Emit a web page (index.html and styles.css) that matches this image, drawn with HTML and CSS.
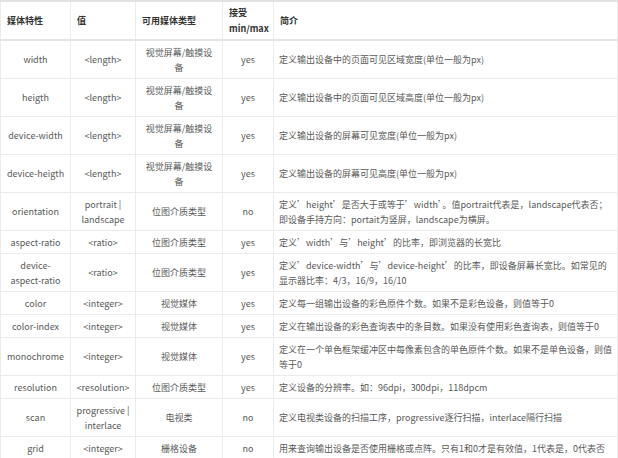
FILE: index.html
```html
<!DOCTYPE html>
<html lang="zh-CN">
<head>
<meta charset="utf-8">
<title>媒体特性</title>
<link rel="stylesheet" href="styles.css">
</head>
<body>
<table class="media-table">
  <colgroup>
    <col class="c1"><col class="c2"><col class="c3"><col class="c4"><col class="c5">
  </colgroup>
  <thead>
    <tr>
      <th>媒体特性</th>
      <th>值</th>
      <th>可用媒体类型</th>
      <th>接受<br>min/max</th>
      <th>简介</th>
    </tr>
  </thead>
  <tbody>
    <tr><td>width</td><td>&lt;length&gt;</td><td class="type">视觉屏幕/触摸设备</td><td>yes</td><td class="desc">定义输出设备中的页面可见区域宽度(单位一般为px)</td></tr>
    <tr><td>heigth</td><td>&lt;length&gt;</td><td class="type">视觉屏幕/触摸设备</td><td>yes</td><td class="desc">定义输出设备中的页面可见区域高度(单位一般为px)</td></tr>
    <tr><td>device-width</td><td>&lt;length&gt;</td><td class="type">视觉屏幕/触摸设备</td><td>yes</td><td class="desc">定义输出设备的屏幕可见宽度(单位一般为px)</td></tr>
    <tr><td>device-heigth</td><td>&lt;length&gt;</td><td class="type">视觉屏幕/触摸设备</td><td>yes</td><td class="desc">定义输出设备的屏幕可见高度(单位一般为px)</td></tr>
    <tr><td>orientation</td><td>portrait |<br>landscape</td><td class="type">位图介质类型</td><td>no</td><td class="desc">定义’height’是否大于或等于’width’。值portrait代表是，landscape代表否；<br>即设备手持方向：portait为竖屏，landscape为横屏。</td></tr>
    <tr><td>aspect-ratio</td><td>&lt;ratio&gt;</td><td class="type">位图介质类型</td><td>yes</td><td class="desc">定义’width’与’height’的比率，即浏览器的长宽比</td></tr>
    <tr><td>device-<br>aspect-ratio</td><td>&lt;ratio&gt;</td><td class="type">位图介质类型</td><td>yes</td><td class="desc">定义’device-width’与’device-height’的比率，即设备屏幕长宽比。如常见的<br>显示器比率：4/3，16/9，16/10</td></tr>
    <tr><td>color</td><td>&lt;integer&gt;</td><td class="type">视觉媒体</td><td>yes</td><td class="desc">定义每一组输出设备的彩色原件个数。如果不是彩色设备，则值等于0</td></tr>
    <tr><td>color-index</td><td>&lt;integer&gt;</td><td class="type">视觉媒体</td><td>yes</td><td class="desc">定义在输出设备的彩色查询表中的条目数。如果没有使用彩色查询表，则值等于0</td></tr>
    <tr><td>monochrome</td><td>&lt;integer&gt;</td><td class="type">视觉媒体</td><td>yes</td><td class="desc">定义在一个单色框架缓冲区中每像素包含的单色原件个数。如果不是单色设备，则值<br>等于0</td></tr>
    <tr><td>resolution</td><td>&lt;resolution&gt;</td><td class="type">位图介质类型</td><td>yes</td><td class="desc">定义设备的分辨率。如：96dpi，300dpi，118dpcm</td></tr>
    <tr><td>scan</td><td>progressive |<br>interlace</td><td class="type">电视类</td><td>no</td><td class="desc">定义电视类设备的扫描工序，progressive逐行扫描，interlace隔行扫描</td></tr>
    <tr><td>grid</td><td>&lt;integer&gt;</td><td class="type">栅格设备</td><td>no</td><td class="desc">用来查询输出设备是否使用栅格或点阵。只有1和0才是有效值，1代表是，0代表否</td></tr>
  </tbody>
</table>
</body>
</html>
```
FILE: styles.css
```css
html, body {
  margin: 0;
  padding: 0;
  background: #ffffff;
}

body {
  font-family: "Noto Sans CJK SC", "Noto Sans", sans-serif;
  font-size: 9px;
  color: #595959;
  overflow: hidden;
}

.media-table {
  border-collapse: collapse;
  table-layout: fixed;
  width: 617px;
  border-top: 2px solid #e2e2e2;
}

.c1 { width: 70px; }
.c2 { width: 65px; }
.c3 { width: 87px; }
.c4 { width: 51px; }
.c5 { width: 344px; }

.media-table th,
.media-table td {
  border: 1px solid #ebebeb;
  vertical-align: middle;
}

.media-table th {
  text-align: left;
  font-weight: 700;
  color: #333333;
  line-height: 15.5px;
  padding: 3px 6px;
  border-bottom: 2px solid #e4e4e4;
  border-top: none;
}

.media-table td {
  text-align: center;
  line-height: 15px;
  padding: 3.5px 5px;
}

.media-table td.type {
  padding-left: 9px;
  padding-right: 9px;
}

.media-table td.desc {
  text-align: left;
  white-space: nowrap;
  padding-left: 5px;
}
```
